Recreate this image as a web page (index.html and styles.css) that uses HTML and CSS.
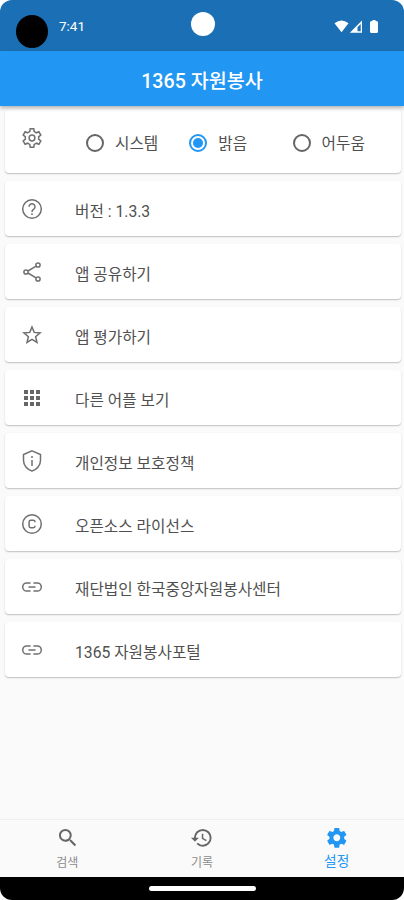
FILE: index.html
```
<!DOCTYPE html>
<html lang="ko">
<head>
<meta charset="utf-8">
<title>1365 자원봉사</title>
<link rel="stylesheet" href="styles.css">
</head>
<body>
<svg class="defs" width="0" height="0">
  <defs>
    <path id="gear" d="M19.43 12.98c.04-.32.07-.64.07-.98s-.03-.66-.07-.98l2.11-1.65c.19-.15.24-.42.12-.64l-2-3.46c-.12-.22-.39-.3-.61-.22l-2.49 1c-.52-.4-1.08-.73-1.69-.98l-.38-2.65C14.46 2.18 14.25 2 14 2h-4c-.25 0-.46.18-.49.42l-.38 2.65c-.61.25-1.17.59-1.69.98l-2.49-1c-.23-.09-.49 0-.61.22l-2 3.46c-.13.22-.07.49.12.64l2.11 1.65c-.04.32-.07.65-.07.98s.03.66.07.98l-2.11 1.65c-.19.15-.24.42-.12.64l2 3.46c.12.22.39.3.61.22l2.49-1c.52.4 1.08.73 1.69.98l.38 2.65c.03.24.24.42.49.42h4c.25 0 .46-.18.49-.42l.38-2.65c.61-.25 1.17-.59 1.69-.98l2.49 1c.23.09.49 0 .61-.22l2-3.46c.12-.22.07-.49-.12-.64l-2.11-1.65zM12 15.5c-1.93 0-3.5-1.57-3.5-3.5s1.57-3.5 3.5-3.5 3.5 1.57 3.5 3.5-1.57 3.5-3.5 3.5z"/>
    <g id="link"><path d="M10.6 7.9H6.800a4.1 4.1 0 0 0 0 8.200h3.800M13.400 7.900h3.800a4.100 4.100 0 0 1 0 8.200h-3.800M8.500 12h7"/></g>
  </defs>
</svg>
<div class="phone">
  <header class="status">
    <span class="lens"></span>
    <span class="time">7:41</span>
    <span class="camera"></span>
    <svg class="signals" width="46" height="14" viewBox="0 0 46 14">
      <path d="M.5 3.2Q7.5-2 14.500 3.200L7.500 12.300z"/>
      <path fill-rule="evenodd" d="M28 .5V12.700H15.800zM26.700 4V11.300H23.500V7.200z"/>
      <path d="M38.500 0h3v1h1q1.500 0 1.500 1.500v9q0 1.500-1.500 1.500h-5q-1.500 0-1.500-1.500v-9Q36 1 37.500 1h1z"/>
    </svg>
  </header>
  <h1 class="appbar">1365 자원봉사</h1>
  <main class="list">
    <section class="card theme">
      <svg class="icon" viewBox="0 0 24 24"><path d="M18.700 12q0-.6-.1-1.200l2.200-1.700-1.900-3.300-2.600 1q-1-.8-2.100-1.200L13.800 2.800h-3.600L9.800 5.600q-1.200.4-2.100 1.200l-2.600-1-1.900 3.300 2.200 1.700q-.2 1.200 0 2.400l-2.200 1.700 1.900 3.300 2.600-1q1 .8 2.100 1.200l.4 2.800h3.600l.4-2.800q1.200-.4 2.100-1.200l2.600 1 1.900-3.300-2.200-1.700q.1-.6.1-1.200z"/><circle cx="12" cy="12" r="2.900"/></svg>
      <div class="choices">
        <span class="choice"><i class="radio"></i>시스템</span>
        <span class="choice"><i class="radio on"></i>밝음</span>
        <span class="choice"><i class="radio"></i>어두움</span>
      </div>
    </section>
    <section class="card">
      <svg class="icon" viewBox="0 0 24 24"><circle cx="12" cy="12" r="9.300"/><path d="M9 9.800a3 3 0 1 1 5.200 2C13.200 12.800 12 13.100 12 15M12 16.300v1.700"/></svg>
      <span>버전 : 1.3.3</span>
    </section>
    <section class="card">
      <svg class="icon" viewBox="0 0 24 24"><circle cx="18" cy="5" r="2.100"/><circle cx="6" cy="12" r="2.100"/><circle cx="18" cy="19" r="2.100"/><path d="m8 11 8-4.800M8 13l8 4.800"/></svg>
      <span>앱 공유하기</span>
    </section>
    <section class="card">
      <svg class="icon" viewBox="0 0 24 24"><path d="m12 4 2.200 5.400 5.900.5-4.500 3.800 1.400 5.700-5-3-5 3 1.400-5.700-4.500-3.800 5.900-.5z"/></svg>
      <span>앱 평가하기</span>
    </section>
    <section class="card">
      <svg class="icon solid" viewBox="0 0 24 24"><path d="M4 4h4v4H4zM10 4h4v4h-4zM16 4h4v4h-4zM4 10h4v4H4zM10 10h4v4h-4zM16 10h4v4h-4zM4 16h4v4H4zM10 16h4v4h-4zM16 16h4v4h-4z"/></svg>
      <span>다른 어플 보기</span>
    </section>
    <section class="card">
      <svg class="icon" viewBox="0 0 24 24"><path d="m12 1.900 8.500 3.700v5.600c0 5-3.600 9.500-8.500 10.800-4.900-1.300-8.500-5.800-8.500-10.800V5.600zM12 7v2M12 11v6"/></svg>
      <span>개인정보 보호정책</span>
    </section>
    <section class="card">
      <svg class="icon" viewBox="0 0 24 24"><circle cx="12" cy="12" r="9.300"/><path d="M15 10.300V10q0-1.700-1.700-1.700h-2.500Q9.100 8.300 9.100 10v4q0 1.700 1.700 1.700h2.500Q15 15.700 15 14v-.3"/></svg>
      <span>오픈소스 라이선스</span>
    </section>
    <section class="card">
      <svg class="icon" viewBox="0 0 24 24"><use href="#link"/></svg>
      <span>재단법인 한국중앙자원봉사센터</span>
    </section>
    <section class="card">
      <svg class="icon" viewBox="0 0 24 24"><use href="#link"/></svg>
      <span>1365 자원봉사포털</span>
    </section>
  </main>
  <nav class="tabs">
    <a class="tab">
      <svg class="icon solid" viewBox="0 0 24 24"><path d="M15.500 14h-.79l-.28-.27A6.471 6.471 0 0 0 16 9.500 6.500 6.500 0 1 0 9.500 16c1.610 0 3.090-.59 4.230-1.570l.27.28v.79l5 4.990L20.490 19l-4.990-5zm-6 0C7.010 14 5 11.990 5 9.500S7.010 5 9.500 5 14 7.010 14 9.500 11.990 14 9.500 14z"/></svg>
      <span>검색</span>
    </a>
    <a class="tab">
      <svg class="icon solid" viewBox="0 0 24 24"><path d="M13 3a9 9 0 0 0-9 9H1l3.890 3.890.07.14L9 12H6c0-3.870 3.130-7 7-7s7 3.130 7 7-3.130 7-7 7c-1.930 0-3.680-.79-4.940-2.060l-1.420 1.420A8.954 8.954 0 0 0 13 21a9 9 0 0 0 0-18zm-1 5v5l4.280 2.540.72-1.210-3.500-2.080V8z"/></svg>
      <span>기록</span>
    </a>
    <a class="tab active">
      <svg class="icon solid" viewBox="0 0 24 24"><use href="#gear"/></svg>
      <span>설정</span>
    </a>
  </nav>
  <footer class="gesture"><span class="pill"></span></footer>
</div>
</body>
</html>
```
FILE: styles.css
```
* { box-sizing: border-box; }
body {
  margin: 0;
  background: #fff;
  font-family: Roboto, "Noto Sans CJK KR", sans-serif;
  color: #505050;
}
.defs { display: block; }
.phone {
  display: flex;
  flex-direction: column;
  height: 900px;
  overflow: hidden;
  border-radius: 12px;
  background: #fafafa;
}
.status {
  position: relative;
  flex: none;
  display: flex;
  align-items: center;
  height: 51px;
  padding: 0 25px 0 16px;
  background: #1b70b5;
  color: #fff;
}
.lens {
  width: 32px;
  height: 33px;
  margin-top: 12px;
  border-radius: 50%;
  background: #000;
}
.time {
  margin: 1px 0 0 11px;
  font-size: 13.500px;
  font-weight: 400;
}
.camera {
  position: absolute;
  left: 191px;
  top: 12px;
  width: 24px;
  height: 24px;
  border-radius: 50%;
  background: #fff;
}
.signals {
  margin: 2px -1px 0 auto;
  fill: #fff;
}
.appbar {
  z-index: 1;
  flex: none;
  height: 55px;
  margin: 0;
  background: #2196f3;
  box-shadow: 0 2px 4px rgba(0, 0, 0, .3);
  color: #fff;
  font-size: 19.600px;
  font-weight: 500;
  line-height: 61px;
  text-align: center;
}
.list {
  flex: 1;
  display: flex;
  flex-direction: column;
  gap: 8px;
  padding: 4px 3px 0 5px;
}
.card {
  flex: none;
  display: flex;
  align-items: center;
  height: 55px;
  padding: 6px 15px 0;
  border-radius: 4px;
  background: #fff;
  box-shadow: 0 1px 1.500px rgba(0, 0, 0, .24);
  font-size: 15.700px;
  line-height: 24px;
}
.card > .icon { margin: -6px 31px 0 0; }
.theme {
  height: 63px;
  padding-top: 4px;
  padding-right: 0;
}
.theme > .icon { margin-top: -11px; }
.icon {
  flex: none;
  width: 24px;
  height: 24px;
  fill: none;
  stroke: #707070;
  stroke-width: 1.500;
}
.solid {
  fill: #666;
  stroke: none;
}
.choices {
  flex: 1;
  display: grid;
  grid-template-columns: repeat(3, 103.300px);
  padding-left: 11px;
}
.choice {
  display: flex;
  align-items: center;
  gap: 11px;
}
.radio {
  display: grid;
  place-items: center;
  width: 18px;
  height: 18px;
  margin-top: -2px;
  border: 2px solid #666;
  border-radius: 50%;
}
.radio.on { border-color: #2196f3; }
.radio.on::after {
  content: "";
  width: 10px;
  height: 10px;
  border-radius: 50%;
  background: #2196f3;
}
.tabs {
  flex: none;
  display: grid;
  grid-template-columns: repeat(3, 1fr);
  height: 58px;
  border-top: 1px solid #f0f0f0;
}
.tab {
  display: flex;
  flex-direction: column;
  align-items: center;
  padding-top: 6px;
  color: #8c8c8c;
  font-size: 12px;
  line-height: 18px;
}
.tab .icon {
  width: 23.600px;
  height: 23.600px;
}
.tab span { margin-top: 4px; }
.active {
  color: #2196f3;
  font-size: 13.700px;
}
.active span { margin-top: 2px; }
.active .icon { fill: #2196f3; }
.gesture {
  flex: none;
  display: flex;
  justify-content: center;
  height: 23px;
  padding-top: 9px;
  background: #000;
}
.pill {
  width: 107px;
  height: 5px;
  border-radius: 3px;
  background: #fff;
}
```
